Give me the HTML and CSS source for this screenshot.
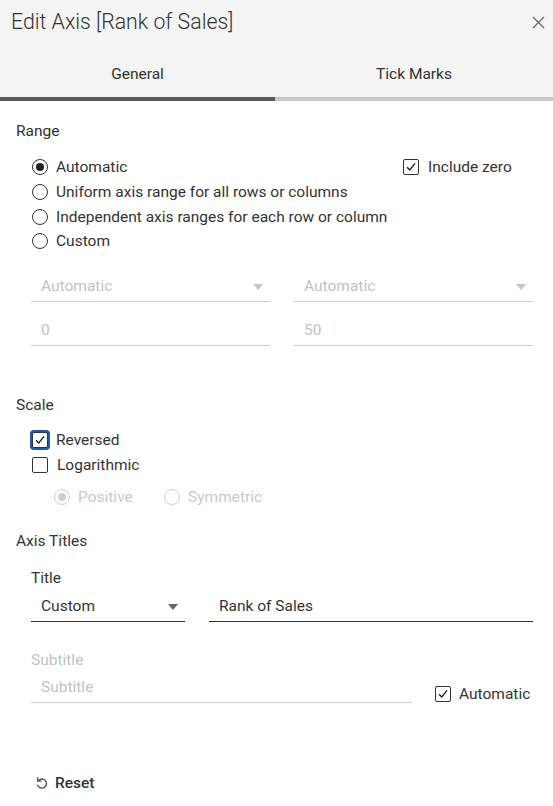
FILE: index.html
```html
<!DOCTYPE html>
<html>
<head>
<meta charset="utf-8">
<link rel="stylesheet" href="styles.css">
</head>
<body>
<div class="dialog">
  <div class="header">
    <div class="title-row">
      <h1 class="title">Edit Axis [Rank of Sales]</h1>
      <svg class="close" width="13" height="13" viewBox="0 0 13 13"><path d="M1 1 L12 12 M12 1 L1 12" stroke="#6a6a6a" stroke-width="1.3" fill="none"/></svg>
    </div>
    <div class="tabs">
      <div class="tab active">General</div>
      <div class="tab">Tick Marks</div>
    </div>
  </div>

  <div class="content">
    <h2 class="section">Range</h2>
    <div class="options">
      <div class="opt-row">
        <label class="opt range-first"><span class="radio checked"></span>Automatic</label>
        <label class="opt"><span class="check"><svg viewBox="0 0 16 16" width="14" height="14"><path d="M3.5 8.2 L6.6 11.4 L12.6 3.8" stroke="#222" stroke-width="1.6" fill="none"/></svg></span>Include zero</label>
      </div>
      <label class="opt"><span class="radio"></span>Uniform axis range for all rows or columns</label>
      <label class="opt"><span class="radio"></span>Independent axis ranges for each row or column</label>
      <label class="opt"><span class="radio"></span>Custom</label>
    </div>
    <div class="fields">
      <div class="field disabled"><span>Automatic</span><span class="arrow"></span></div>
      <div class="field disabled"><span>Automatic</span><span class="arrow"></span></div>
      <div class="field disabled input"><span>0</span></div>
      <div class="field disabled input"><span>50</span></div>
    </div>

    <h2 class="section scale">Scale</h2>
    <div class="options scale-opts">
      <label class="opt"><span class="check focus"><svg viewBox="0 0 16 16" width="14" height="14"><path d="M3.5 8.2 L6.6 11.4 L12.6 3.8" stroke="#222" stroke-width="1.6" fill="none"/></svg></span>Reversed</label>
      <label class="opt"><span class="check"></span>Logarithmic</label>
      <div class="sub-opts">
        <label class="opt dis"><span class="radio checked"></span>Positive</label>
        <label class="opt dis"><span class="radio"></span>Symmetric</label>
      </div>
    </div>

    <h2 class="section axis">Axis Titles</h2>
    <div class="titles">
      <div class="label">Title</div>
      <div class="title-fields">
        <div class="field dark sel"><span>Custom</span><span class="arrow"></span></div>
        <div class="field dark grow"><span>Rank of Sales</span></div>
      </div>
      <div class="label muted sub-label">Subtitle</div>
      <div class="subtitle-row">
        <div class="field disabled subtitle"><span>Subtitle</span></div>
        <label class="opt auto"><span class="check"><svg viewBox="0 0 16 16" width="14" height="14"><path d="M3.5 8.2 L6.6 11.4 L12.6 3.8" stroke="#222" stroke-width="1.6" fill="none"/></svg></span>Automatic</label>
      </div>
    </div>

    <div class="reset">
      <svg width="12" height="13" viewBox="0 0 12 13"><path d="M2.6 4.3 A4.6 4.6 0 1 1 1.4 8.6" stroke="#555" stroke-width="1.4" fill="none"/><path d="M1.6 1.2 V5 H5.4" stroke="#555" stroke-width="1.4" fill="none"/></svg>
      <span>Reset</span>
    </div>
  </div>
</div>
</body>
</html>
```

FILE: styles.css
```css
* { box-sizing: border-box; }
html, body {
  margin: 0;
  padding: 0;
  background: #ffffff;
}
body {
  font-family: Roboto, "Liberation Sans", sans-serif;
  color: #333333;
  font-size: 15.5px;
}
.dialog {
  width: 553px;
  height: 806px;
  overflow: hidden;
}
.header {
  background: #f4f4f4;
}
.title-row {
  display: flex;
  justify-content: space-between;
  align-items: center;
  height: 46px;
  padding: 0 8px 2px 11px;
}
.title {
  margin: 0;
  font-size: 21.3px;
  font-weight: 300;
  line-height: 24px;
  color: #333;
}
.tabs {
  display: flex;
}
.tab {
  flex: 0 0 275px;
  text-align: center;
  padding-top: 18px;
  line-height: 20px;
  height: 55px;
  border-bottom: 4px solid #c8c8c8;
  font-size: 15.5px;
  color: #333;
}
.tab + .tab { flex: 1; }
.tab.active { border-bottom-color: #595959; }

.content {
  padding: 0 20px 0 16px;
}
.section {
  margin: 20px 0 0;
  font-size: 15.5px;
  font-weight: 400;
  line-height: 20px;
}
.options {
  padding-left: 16px;
  margin-top: 14px;
}
.opt-row { display: flex; }
.range-first { flex: 0 0 371px; }
.opt {
  display: flex;
  align-items: center;
  height: 24.7px;
  line-height: 20px;
  color: #333;
}
.radio {
  width: 16px;
  height: 16px;
  border: 1px solid #333;
  border-radius: 50%;
  margin-right: 8px;
  display: flex;
  align-items: center;
  justify-content: center;
  flex: none;
}
.radio.checked::after {
  content: "";
  width: 8px;
  height: 8px;
  border-radius: 50%;
  background: #222;
}
.check {
  width: 16px;
  height: 16px;
  border: 1px solid #333;
  border-radius: 2px;
  margin-right: 9px;
  display: flex;
  align-items: center;
  justify-content: center;
  flex: none;
  background: #fff;
}
.check.focus {
  box-shadow: 0 0 0 2px #1a5ca8;
  margin-right: 8px;
}
.fields {
  display: grid;
  grid-template-columns: 239px 239px;
  column-gap: 24px;
  row-gap: 15px;
  margin: 19px 0 0 15px;
}
.field {
  display: flex;
  justify-content: space-between;
  align-items: center;
  height: 29px;
  padding: 4px 7px 5px 10px;
  line-height: 20px;
  border-bottom: 1px solid #cccccc;
}
.field.disabled { color: #c2c2c2; }
.arrow {
  width: 0;
  height: 0;
  border-left: 5px solid transparent;
  border-right: 5px solid transparent;
  border-top: 6px solid #c6c6c6;
  margin-top: 1px;
}
.field.dark { border-bottom-color: #333; color: #333; }
.field.dark .arrow { border-top-color: #666; }

.section.scale { margin-top: 49px; }
.scale-opts { margin-top: 13px; }
.sub-opts {
  display: flex;
  padding-left: 22px;
  margin-top: 8px;
}
.opt.dis { color: #c8c8c8; }
.opt.dis .radio { border-color: #cfcfcf; }
.opt.dis .radio.checked::after { background: #cfcfcf; }
.sub-opts .opt:first-child { width: 110px; }

.section.axis { margin-top: 21px; }
.titles { padding-left: 15px; }
.label {
  margin-top: 17px;
  line-height: 20px;
}
.label.muted { color: #c2c2c2; }
.title-fields {
  display: flex;
  gap: 24px;
  margin-top: 5px;
}
.field.sel { flex: 0 0 154px; }
.field.grow { flex: 0 0 324px; }
.sub-label { margin-top: 28px; }
.subtitle-row {
  display: flex;
  align-items: flex-start;
  margin-top: 4px;
}
.field.subtitle { flex: 0 0 381px; }
.opt.auto { margin-left: 23px; margin-top: 8px; }
.opt.auto .check { margin-right: 8px; }

.reset {
  display: flex;
  align-items: center;
  margin: 67px 0 0 20px;
  font-size: 15.5px;
  font-weight: 500;
  color: #333;
}
.reset svg { margin-right: 7px; }
```
